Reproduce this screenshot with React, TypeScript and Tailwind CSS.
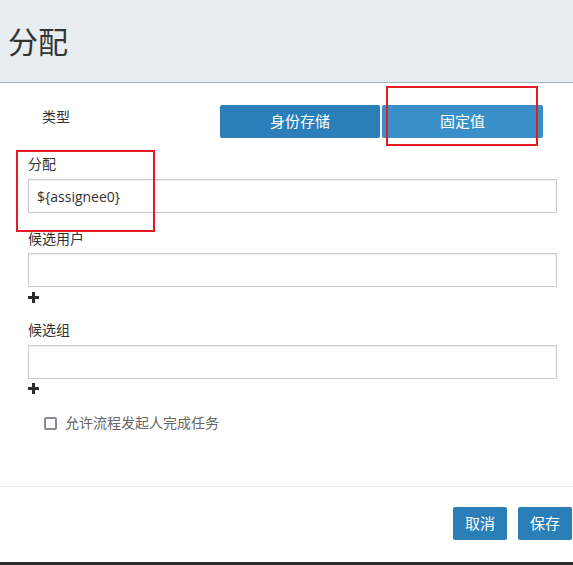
import React, { useState } from 'react';

const FONT = "font-['Open_Sans','Noto_Sans_CJK_SC',sans-serif]";

const PlusIcon: React.FC = () => (
  <svg width="11" height="11" viewBox="0 0 11 11" className="block">
    <rect x="4" y="0" width="3" height="11" fill="#2b2b2b" />
    <rect x="0" y="4" width="11" height="3" fill="#2b2b2b" />
  </svg>
);

const FieldLabel: React.FC<{ children: React.ReactNode }> = ({ children }) => (
  <label className="block h-5 text-[14px] leading-5 text-[#333]">{children}</label>
);

const TextInput: React.FC<{ value?: string; onChange?: (v: string) => void }> = ({ value = '', onChange }) => (
  <input
    type="text"
    value={value}
    onChange={(e) => onChange?.(e.target.value)}
    className="block h-[34px] w-full border border-[#cccccc] bg-white px-2 text-[14px] text-[#333] shadow-[inset_0_1px_1px_rgba(0,0,0,0.075)] outline-none"
  />
);

const App: React.FC = () => {
  const [mode, setMode] = useState<'identity' | 'fixed'>('fixed');
  const [assignee, setAssignee] = useState('${assignee0}');
  const [users, setUsers] = useState('');
  const [groups, setGroups] = useState('');
  const [allowInitiator, setAllowInitiator] = useState(false);

  return (
    <div className={`relative flex h-[565px] w-[573px] flex-col overflow-hidden bg-white ${FONT}`}>
      {/* Header */}
      <div className="flex h-[83px] shrink-0 items-center border-b border-[#a9b1b9] bg-[#e8edf1] pl-2">
        <h1 className="mt-[2px] text-[30px] font-normal leading-none text-[#333]">分配</h1>
      </div>

      {/* Form */}
      <div className="flex flex-1 flex-col pl-7 pr-4">
        <div className="mt-[22px] flex h-[33px] items-start">
          <span className="ml-[14px] mt-[2px] w-[178px] text-[14px] leading-5 text-[#333]">类型</span>
          <div className="flex gap-[2px]">
            <button
              onClick={() => setMode('identity')}
              className={`h-[33px] w-[160px] rounded-[2px] text-[15px] text-white ${mode === 'identity' ? 'bg-[#3a8fc8]' : 'bg-[#2a7fb8]'}`}
            >
              身份存储
            </button>
            <button
              onClick={() => setMode('fixed')}
              className={`h-[33px] w-[161px] rounded-[2px] text-[15px] text-white ${mode === 'fixed' ? 'bg-[#3a8fc8]' : 'bg-[#2a7fb8]'}`}
            >
              固定值
            </button>
          </div>
        </div>

        <div className="mt-4">
          <FieldLabel>分配</FieldLabel>
          <div className="mt-[5px]">
            <TextInput value={assignee} onChange={setAssignee} />
          </div>
        </div>

        <div className="mt-4">
          <FieldLabel>候选用户</FieldLabel>
          <div className="mt-1">
            <TextInput value={users} onChange={setUsers} />
          </div>
          <div className="mt-[5px]">
            <PlusIcon />
          </div>
        </div>

        <div className="mt-[17px]">
          <FieldLabel>候选组</FieldLabel>
          <div className="mt-[5px]">
            <TextInput value={groups} onChange={setGroups} />
          </div>
          <div className="mt-[4px]">
            <PlusIcon />
          </div>
        </div>

        <label className="ml-4 mt-[19px] flex items-center gap-[8px] text-[14px] leading-5 text-[#666]">
          <input
            type="checkbox"
            checked={allowInitiator}
            onChange={(e) => setAllowInitiator(e.target.checked)}
            className="h-[13px] w-[13px] appearance-none rounded-[2px] border-2 border-[#8a8a92] bg-white"
          />
          允许流程发起人完成任务
        </label>
      </div>

      {/* Footer */}
      <div className="h-[76px] shrink-0 border-t border-[#e5e5e5]">
        <div className="mt-5 flex justify-end gap-[11px] pr-px">
          <button className="h-[33px] w-[54px] rounded-[2px] bg-[#2a7fb8] text-[15px] text-white">取消</button>
          <button className="h-[33px] w-[54px] rounded-[2px] bg-[#2a7fb8] text-[15px] text-white">保存</button>
        </div>
      </div>
      <div className="h-[3px] shrink-0 bg-[#2d2d2d]" />

      {/* Highlight markers */}
      <div className="pointer-events-none absolute left-[386px] top-[86px] h-[60px] w-[152px] border-2 border-[#e31b23]" />
      <div className="pointer-events-none absolute left-[16px] top-[150px] h-[82px] w-[139px] border-2 border-[#e31b23]" />
    </div>
  );
};

export default App;
